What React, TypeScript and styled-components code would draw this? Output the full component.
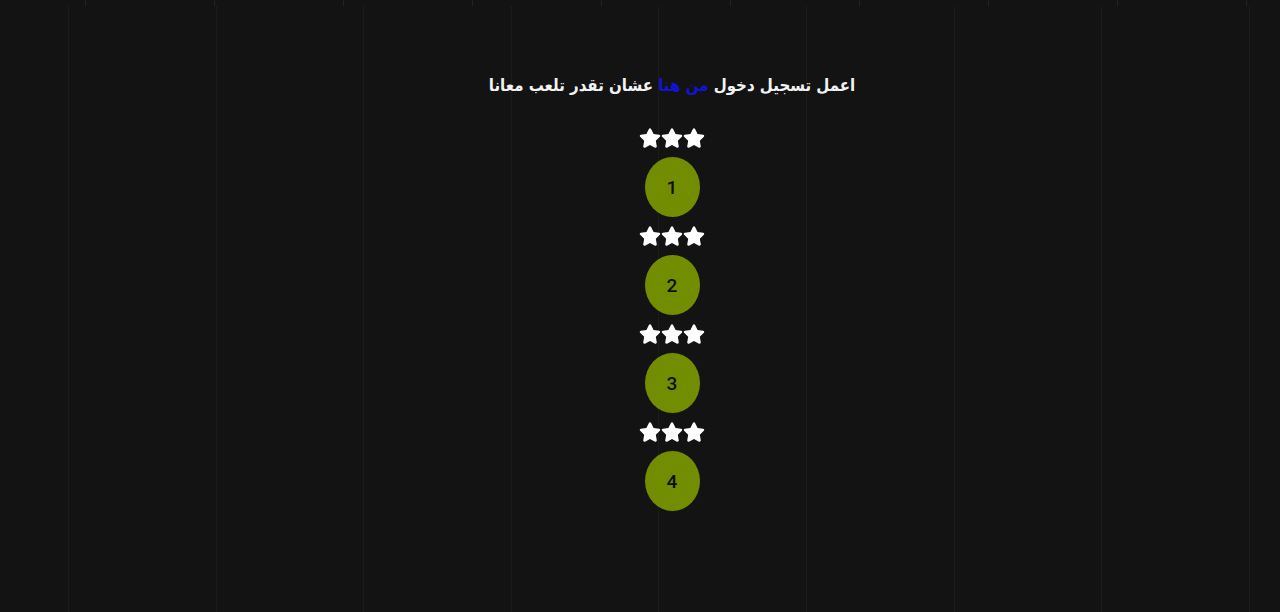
import React from "react";
import styled, { createGlobalStyle } from "styled-components";
import { FaStar } from "react-icons/fa";

const Global = createGlobalStyle`
  html, body { margin: 0; padding: 0; background: #131313; }
  body { font-family: "DejaVu Sans", "Liberation Sans", sans-serif; }
`;

const Page = styled.div`
  position: relative;
  width: 1280px;
  height: 612px;
  overflow: hidden;
  background-color: #131313;
  background-image: repeating-linear-gradient(
    to right,
    transparent 0px,
    transparent 68px,
    #1b1b1b 68px,
    #1b1b1b 69px,
    transparent 69px,
    transparent 147.6px
  );
  box-sizing: border-box;
  padding: 71px 0 0 64px;
  display: flex;
  flex-direction: column;
  align-items: center;
`;

const TopStrip = styled.div`
  position: absolute;
  left: 0;
  top: 0;
  width: 100%;
  height: 6px;
  background-color: #131313;
  background-image: repeating-linear-gradient(
    to right,
    transparent 0px,
    transparent 85px,
    #222 85px,
    #222 86px,
    transparent 86px,
    transparent 129px
  );
`;

const Title = styled.h1`
  margin: 0 0 27px;
  direction: rtl;
  font-family: "DejaVu Sans Condensed", "DejaVu Sans", sans-serif;
  font-size: 16.7px;
  font-weight: bold;
  color: #f2f2f2;
  line-height: 28px;
`;

const Link = styled.span`
  color: #1212d8;
`;

const Levels = styled.div`
  display: flex;
  flex-direction: column;
  align-items: center;
  gap: 7px;
`;

const Stars = styled.div`
  display: flex;
  align-items: center;
  height: 24px;
  color: #ffffff;
  font-size: 22px;
`;

const Circle = styled.div`
  width: 55px;
  height: 60px;
  border-radius: 50%;
  background: #728e00;
  color: #0d0d0d;
  display: flex;
  align-items: center;
  justify-content: center;
  font-family: Roboto, "Liberation Sans", sans-serif;
  font-weight: 500;
  font-size: 19px;
`;

export default function App() {
  return (
    <>
      <Global />
      <Page>
        <TopStrip />
        <Title>
          اعمل تسجيل دخول <Link>من هنا</Link> عشان تقدر تلعب معانا
        </Title>
        <Levels>
          {[1, 2, 3, 4].map((n) => (
            <React.Fragment key={n}>
              <Stars>
                <FaStar />
                <FaStar />
                <FaStar />
              </Stars>
              <Circle>{n}</Circle>
            </React.Fragment>
          ))}
        </Levels>
      </Page>
    </>
  );
}
